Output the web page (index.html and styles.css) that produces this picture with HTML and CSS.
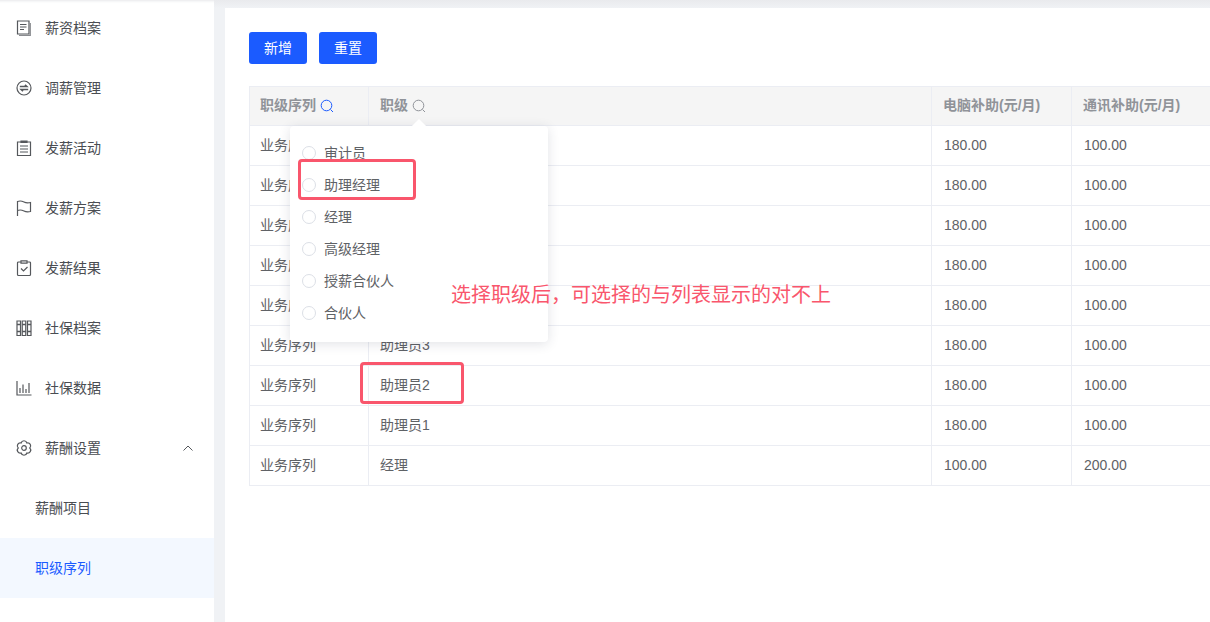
FILE: index.html
```html
<!DOCTYPE html>
<html lang="zh-CN">
<head>
<meta charset="utf-8">
<title>职级序列</title>
<link rel="stylesheet" href="styles.css">
</head>
<body>
<div class="app">
  <aside class="sidebar">
    <nav class="menu">
      <div class="item"><svg class="ico" viewBox="0 0 16 16"><path d="M1.500 1h11.500v13H1.500z M4 4.500h6.500 M4 7h6.500 M4 9.500h4"/><path class="shade" d="M3 15.300h11.300V3"/></svg><span>薪资档案</span></div>
      <div class="item"><svg class="ico" viewBox="0 0 16 16"><circle cx="8" cy="8" r="7"/><path class="thick" d="M3.800 6.500h7L9 4.800 M12.200 9.500h-7L7 11.200"/></svg><span>调薪管理</span></div>
      <div class="item"><svg class="ico" viewBox="0 0 16 16"><path d="M1.500 2h13v13.500h-13z M5 1h6v1.500H5z M4 6h8 M4 9h8 M4 12h8"/></svg><span>发薪活动</span></div>
      <div class="item"><svg class="ico" viewBox="0 0 16 16"><path d="M1.500 16V1.500C4 .5 6 1 8 2s4 1 6.500.5v9C12 12 10 12 8 11s-4-1.500-6.500-.5"/></svg><span>发薪方案</span></div>
      <div class="item"><svg class="ico" viewBox="0 0 16 16"><path d="M5 2H2.500a1 1 0 0 0-1 1v11.500a1 1 0 0 0 1 1h11a1 1 0 0 0 1-1V3a1 1 0 0 0-1-1H11 M5 .8h6v2.400H5z M5 8.500l2.500 2.500L11.500 7"/></svg><span>发薪结果</span></div>
      <div class="item"><svg class="ico" viewBox="0 0 16 16"><path d="M1 1h3.500v14.500H1z M6.250 1h3.500v14.500h-3.500z M11.500 1H15v14.500h-3.500z"/><path class="thick" d="M1 4.500h3.500 M6.250 4.500h3.500 M11.500 4.500H15 M1 11.500h3.500 M6.250 11.500h3.500 M11.500 11.500H15"/></svg><span>社保档案</span></div>
      <div class="item"><svg class="ico" viewBox="0 0 16 16"><path d="M1 1v14h14.500 M4 13V8 M7 13V4.500 M10 13V9 M13 13V3"/></svg><span>社保数据</span></div>
      <div class="item"><svg class="ico" viewBox="0 0 16 16"><path d="M13.800 8A3 3 0 0 1 10.900 13 3 3 0 0 1 5.100 13 3 3 0 0 1 2.200 8 3 3 0 0 1 5.100 3 3 3 0 0 1 10.900 3 3 3 0 0 1 13.800 8z"/><circle cx="8" cy="8" r="2.300"/></svg><span>薪酬设置</span><svg class="chev" viewBox="0 0 10 6"><path d="M.5 5.500 5 1l4.500 4.500"/></svg></div>
      <div class="item sub"><span>薪酬项目</span></div>
      <div class="item sub active"><span>职级序列</span></div>
    </nav>
  </aside>
  <main class="main">
    <div class="panel">
      <div class="toolbar">
        <button class="btn">新增</button>
        <button class="btn">重置</button>
      </div>
      <div class="table">
        <div class="row head">
          <div class="cell">职级序列<svg class="search on" viewBox="0 0 14 14"><circle cx="6.500" cy="6.500" r="5.300"/><path d="M10.500 10.500 13 13"/></svg></div>
          <div class="cell">职级<svg class="search" viewBox="0 0 14 14"><circle cx="6.500" cy="6.500" r="5.300"/><path d="M10.500 10.500 13 13"/></svg></div>
          <div class="cell">电脑补助(元/月)</div>
          <div class="cell">通讯补助(元/月)</div>
          <div class="cell"></div>
        </div>
        <div class="row"><div class="cell">业务序列</div><div class="cell">审计员</div><div class="cell num">180.00</div><div class="cell num">100.00</div><div class="cell"></div></div>
        <div class="row"><div class="cell">业务序列</div><div class="cell">助理经理</div><div class="cell num">180.00</div><div class="cell num">100.00</div><div class="cell"></div></div>
        <div class="row"><div class="cell">业务序列</div><div class="cell">经理</div><div class="cell num">180.00</div><div class="cell num">100.00</div><div class="cell"></div></div>
        <div class="row"><div class="cell">业务序列</div><div class="cell">高级经理</div><div class="cell num">180.00</div><div class="cell num">100.00</div><div class="cell"></div></div>
        <div class="row"><div class="cell">业务序列</div><div class="cell">合伙人</div><div class="cell num">180.00</div><div class="cell num">100.00</div><div class="cell"></div></div>
        <div class="row"><div class="cell">业务序列</div><div class="cell">助理员3</div><div class="cell num">180.00</div><div class="cell num">100.00</div><div class="cell"></div></div>
        <div class="row"><div class="cell">业务序列</div><div class="cell">助理员2</div><div class="cell num">180.00</div><div class="cell num">100.00</div><div class="cell"></div></div>
        <div class="row"><div class="cell">业务序列</div><div class="cell">助理员1</div><div class="cell num">180.00</div><div class="cell num">100.00</div><div class="cell"></div></div>
        <div class="row"><div class="cell">业务序列</div><div class="cell">经理</div><div class="cell num">100.00</div><div class="cell num">200.00</div><div class="cell"></div></div>
      </div>
    </div>
  </main>
  <div class="popover">
    <div class="arrow"></div>
    <label class="opt"><i class="radio"></i><span>审计员</span></label>
    <label class="opt"><i class="radio"></i><span>助理经理</span></label>
    <label class="opt"><i class="radio"></i><span>经理</span></label>
    <label class="opt"><i class="radio"></i><span>高级经理</span></label>
    <label class="opt"><i class="radio"></i><span>授薪合伙人</span></label>
    <label class="opt"><i class="radio"></i><span>合伙人</span></label>
  </div>
  <div class="mark mark-a"></div>
  <div class="mark mark-b"></div>
  <div class="note">选择职级后，可选择的与列表显示的对不上</div>
</div>
</body>
</html>
```
FILE: styles.css
```css
* { box-sizing: border-box; }
html, body { margin: 0; height: 100%; overflow: hidden; }
body {
  font-family: "Liberation Sans", "Noto Sans CJK SC", sans-serif;
  font-size: 14px;
  color: #606266;
  background: #f0f2f5;
}
.app { position: relative; display: flex; width: 1210px; height: 622px; overflow: hidden; }
.sidebar {
  width: 214px;
  flex: none;
  background: #fff;
  overflow: hidden;
  box-shadow: inset 0 4px 3px -3px #e6e7ea;
}
.menu { margin-top: -2px; display: flex; flex-direction: column; }
.item {
  height: 60px;
  flex: none;
  display: flex;
  align-items: center;
  padding-left: 16px;
  color: #4a4d52;
  font-size: 14px;
}
.item span { padding-bottom: 2px; }
.ico {
  width: 16px;
  height: 16px;
  margin-right: 13px;
  fill: none;
  stroke: #55585c;
  stroke-width: 1.200;
  overflow: visible;
}
.ico .shade { stroke: #8a8c90; }
.ico .thick { stroke-width: 1.600; }
.chev {
  width: 10px;
  height: 6px;
  margin-left: 82px;
  fill: none;
  stroke: #55585c;
  stroke-width: 1;
}
.sub { padding-left: 35px; }
.active { background: #f3f8ff; color: #1b5bff; }
.main {
  flex: 1;
  min-width: 0;
  padding: 8px 0 0 11px;
  background: linear-gradient(#e9eaed, #f0f2f5 8px);
}
.panel { height: 100%; background: #fff; padding: 24px 0 0 24px; overflow: hidden; }
.toolbar { display: flex; gap: 12px; margin-bottom: 22px; }
.btn {
  width: 58px;
  height: 32px;
  border: 0;
  border-radius: 3px;
  background: #1b5bff;
  color: #fff;
  font: 14px "Liberation Sans", "Noto Sans CJK SC", sans-serif;
  padding: 0 0 2px;
}
.table { width: 1100px; border-top: 1px solid #ebedf3; border-left: 1px solid #ebedf3; }
.row { display: grid; grid-template-columns: 119px 563px 140px 140px 137px; height: 40px; border-bottom: 1px solid #ebedf3; }
.cell { display: flex; align-items: center; padding: 0 0 3px 11px; border-right: 1px solid #ebedf3; color: #5f6266; white-space: nowrap; }
.cell:first-child { padding-left: 10px; }
.cell.num { padding: 0 0 2px 12px; }
.head { height: 39px; background: #f5f5f5; }
.head .cell { color: #909399; font-weight: 700; padding-bottom: 4px; }
.search { width: 14px; height: 14px; margin: 4px 0 0 4px; fill: none; stroke: #909399; stroke-width: 1; }
.search.on { stroke: #1b5bff; }
.popover {
  position: absolute;
  left: 290px;
  top: 126px;
  width: 258px;
  height: 216px;
  padding: 11px 0 0 12px;
  background: #fff;
  border-radius: 4px;
  box-shadow: 0 2px 12px rgba(40, 50, 80, .14);
}
.arrow {
  position: absolute;
  left: 124px;
  top: -5px;
  width: 10px;
  height: 10px;
  background: #fff;
  transform: rotate(45deg);
}
.opt { position: relative; display: flex; align-items: center; height: 32px; color: #5f6266; }
.opt span { padding-bottom: 2px; }
.radio {
  width: 14px;
  height: 14px;
  margin-right: 8px;
  border: 1px solid #dcdfe6;
  border-radius: 50%;
  background: #fff;
}
.mark { position: absolute; border: 3px solid #f9566c; border-radius: 4px; }
.mark-a { left: 298px; top: 159px; width: 118px; height: 41px; }
.mark-b { left: 360px; top: 362px; width: 104px; height: 42px; }
.note { position: absolute; left: 451px; top: 282px; font-size: 20px; line-height: 26px; color: #f9566c; white-space: nowrap; }
```
